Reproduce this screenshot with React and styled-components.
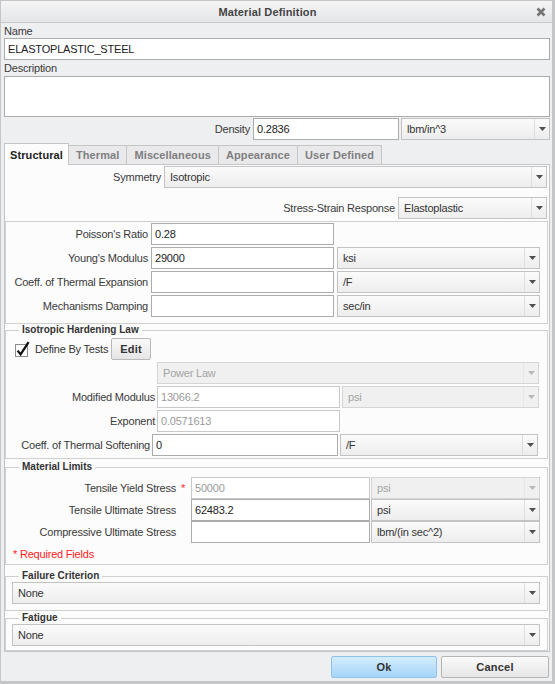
import React from 'react'
import styled, { createGlobalStyle } from 'styled-components'

const GlobalStyle = createGlobalStyle`
    html, body {
        margin: 0;
        padding: 0;
        background: #c6c7c9;
    }
    body {
        font-family: "Liberation Sans", Arial, sans-serif;
        font-size: 11px;
        color: #333333;
    }
    * {
        box-sizing: border-box;
    }
`

const Window = styled.div`
    width: 555px;
    height: 684px;
    border-style: solid;
    border-color: #c5c6c8;
    border-width: 1px 3px 3px 1px;
    background: #eeeff1;
    display: flex;
    flex-direction: column;
    letter-spacing: -0.2px;
`

const TitleBar = styled.div`
    flex: none;
    height: 22px;
    display: grid;
    grid-template-columns: 1fr auto 1fr;
    align-items: center;
    background: linear-gradient(#f5f5f6, #e5e6e8);
    border-bottom: 1px solid #c9cacc;
    font-weight: bold;
    letter-spacing: 0.15px;
    color: #444444;
`

const Title = styled.div`
    grid-column: 2;
    margin-right: 18px;
`

const CloseButton = styled.div`
    justify-self: end;
    width: 22px;
    display: flex;
    align-items: center;
    justify-content: center;
`

const Body = styled.div`
    flex: 1;
    display: flex;
    flex-direction: column;
    padding: 1px 2px 0 3px;
`

const FieldLabel = styled.div`
    height: ${(props) => props.h}px;
    line-height: ${(props) => props.h}px;
    color: #3a3a3a;
`

const TextInput = styled.input`
    width: 100%;
    height: 22px;
    margin: 0;
    border: 1px solid ${(props) => (props.disabled ? '#c9c9c9' : '#acacac')};
    background: #ffffff;
    padding: 0 3px;
    font: inherit;
    letter-spacing: inherit;
    color: ${(props) => (props.disabled ? '#9a9a9a' : '#222222')};
    outline: none;
`

const TextArea = styled.div`
    height: 41px;
    border: 1px solid #acacac;
    background: #ffffff;
    margin-bottom: 1px;
`

const DensityRow = styled.div`
    display: grid;
    grid-template-columns: 1fr 146px 149px;
    column-gap: 2px;
    align-items: center;
    height: 22px;
`

const SideLabel = styled.span`
    text-align: right;
    white-space: nowrap;
    color: #3a3a3a;
    padding-right: ${(props) => props.pr || 0}px;
`

const SelectBox = styled.div`
    height: 22px;
    display: flex;
    border: 1px solid ${(props) => (props.disabled ? '#d5d5d5' : '#c3c3c3')};
    background: ${(props) =>
        props.disabled ? '#f0f0f0' : 'linear-gradient(#fbfbfb, #ededed)'};
    color: ${(props) => (props.disabled ? '#a3a3a3' : '#333333')};
    grid-column: ${(props) => props.span || 'auto'};
`

const SelectText = styled.span`
    flex: 1;
    display: flex;
    align-items: center;
    padding-left: 5px;
    white-space: nowrap;
    overflow: hidden;
`

const SelectArrow = styled.span`
    width: 15px;
    display: flex;
    align-items: center;
    justify-content: center;
    border-left: 1px solid ${(props) => (props.disabled ? '#e6e6e6' : '#dedede')};
`

const TabStrip = styled.div`
    display: flex;
    align-items: flex-end;
    height: 22px;
    margin-top: 3px;
    margin-bottom: -1px;
    position: relative;
    z-index: 1;
`

const Tab = styled.div`
    height: ${(props) => (props.active ? 22 : 19)}px;
    margin-bottom: ${(props) => (props.active ? 0 : 1)}px;
    margin-left: ${(props) => (props.first ? 0 : -1)}px;
    padding: 0 ${(props) => (props.active ? 5 : 7)}px;
    display: flex;
    align-items: center;
    border: 1px solid #c5c5c5;
    border-bottom: none;
    background: ${(props) => (props.active ? '#fcfcfc' : '#e9e9eb')};
    color: ${(props) => (props.active ? '#222222' : '#7f7f7f')};
    font-weight: bold;
    letter-spacing: 0.1px;
`

const Panel = styled.div`
    border: 1px solid #c5c5c5;
    background: #fcfcfc;
    padding: 1px 1px 0 0;
    display: flex;
    flex-direction: column;
`

const TopRow = styled.div`
    display: grid;
    grid-template-columns: 1fr ${(props) => props.w}px;
    column-gap: 3px;
    align-items: center;
    height: 22px;
    padding-right: 1px;
    margin-top: ${(props) => props.mt || 0}px;
`

const Box = styled.div`
    border: 1px solid #d0d0d0;
    margin-top: 2px;
    padding: 1px 0 6px 0;
    display: flex;
    flex-direction: column;
    gap: 2px;
`

const Group = styled.fieldset`
    margin: ${(props) => props.mt || 0}px 0 0 0;
    padding: ${(props) => props.pad};
    border: 1px solid #d0d0d0;
    min-width: 0;
    display: flex;
    flex-direction: column;
    gap: ${(props) => props.gap || 0}px;
`

const GroupTitle = styled.legend`
    margin-left: ${(props) => props.ml}px;
    padding: 0 3px;
    font-size: 10px;
    line-height: 12px;
    font-weight: bold;
    letter-spacing: 0;
    color: #333333;
`

const FormRow = styled.div`
    display: grid;
    grid-template-columns: ${(props) => props.cols};
    column-gap: ${(props) => props.gap}px;
    align-items: center;
    height: 22px;
`

const Star = styled.span`
    color: #ff2a2a;
    padding-left: 4px;
`

const CheckRow = styled.div`
    display: flex;
    align-items: center;
    height: 22px;
    padding-left: 9px;
`

const CheckText = styled.span`
    margin-left: 5px;
    margin-right: 3px;
    color: #333333;
`

const SmallButton = styled.div`
    height: 22px;
    padding: 0 8px;
    display: flex;
    align-items: center;
    border: 1px solid #b9b9b9;
    border-radius: 2px;
    background: linear-gradient(#f9f9f9, #e5e5e5);
    font-weight: bold;
    letter-spacing: 0.2px;
    color: #333333;
`

const Required = styled.div`
    margin-top: 4px;
    height: 14px;
    line-height: 14px;
    padding-left: 7px;
    color: #ff1a1a;
`

const Footer = styled.div`
    flex: none;
    display: flex;
    justify-content: flex-end;
    gap: 4px;
    padding: 4px 3px 3px 0;
`

const DialogButton = styled.div`
    width: ${(props) => props.w}px;
    height: 22px;
    display: flex;
    align-items: center;
    justify-content: center;
    border: 1px solid ${(props) => (props.primary ? '#8fc3ea' : '#b5b5b5')};
    border-radius: 2px;
    background: ${(props) =>
        props.primary
            ? 'linear-gradient(#d4edfd, #a4d4f8)'
            : 'linear-gradient(#fafafa, #e6e6e6)'};
    font-weight: bold;
    letter-spacing: 0.2px;
    color: #333333;
`

const Arrow = ({ disabled }) => (
    <svg width="7" height="4" viewBox="0 0 7 4">
        <polygon points="0,0 7,0 3.5,4" fill={disabled ? '#b8b8b8' : '#4f4f4f'} />
    </svg>
)

const Select = ({ value, disabled, span }) => (
    <SelectBox disabled={disabled} span={span}>
        <SelectText>{value}</SelectText>
        <SelectArrow disabled={disabled}>
            <Arrow disabled={disabled} />
        </SelectArrow>
    </SelectBox>
)

const CloseIcon = () => (
    <svg width="10" height="10" viewBox="0 0 10 10">
        <path d="M1.5 1.5 L8.5 8.5 M8.5 1.5 L1.5 8.5" stroke="#747474" strokeWidth="2.6" />
    </svg>
)

const CheckIcon = () => (
    <svg width="15" height="17" viewBox="0 0 15 17">
        <rect x="0.5" y="3.5" width="12" height="12" fill="#ffffff" stroke="#8c8c8c" />
        <path d="M2.6 9.6 L5.6 13.4 L13.6 1.2" fill="none" stroke="#111111" strokeWidth="2.3" />
    </svg>
)

const tabs = ['Structural', 'Thermal', 'Miscellaneous', 'Appearance', 'User Defined']

const elasticRows = [
    { label: "Poisson's Ratio", value: '0.28' },
    { label: "Young's Modulus", value: '29000', unit: 'ksi' },
    { label: 'Coeff. of Thermal Expansion', value: '', unit: '/F' },
    { label: 'Mechanisms Damping', value: '', unit: 'sec/in' },
]

const limitRows = [
    { label: 'Tensile Yield Stress', value: '50000', unit: 'psi', required: true, disabled: true },
    { label: 'Tensile Ultimate Stress', value: '62483.2', unit: 'psi' },
    { label: 'Compressive Ultimate Stress', value: '', unit: 'lbm/(in sec^2)' },
]

export default function App() {
    return (
        <>
            <GlobalStyle />
            <Window>
                <TitleBar>
                    <Title>Material Definition</Title>
                    <CloseButton>
                        <CloseIcon />
                    </CloseButton>
                </TitleBar>
                <Body>
                    <FieldLabel h={14}>Name</FieldLabel>
                    <TextInput readOnly value="ELASTOPLASTIC_STEEL" />
                    <FieldLabel h={16}>Description</FieldLabel>
                    <TextArea />
                    <DensityRow>
                        <SideLabel pr={1}>Density</SideLabel>
                        <TextInput readOnly value="0.2836" />
                        <Select value="lbm/in^3" />
                    </DensityRow>

                    <TabStrip>
                        {tabs.map((t, i) => (
                            <Tab key={t} active={i === 0} first={i === 0}>
                                {t}
                            </Tab>
                        ))}
                    </TabStrip>
                    <Panel>
                        <TopRow w={383}>
                            <SideLabel>Symmetry</SideLabel>
                            <Select value="Isotropic" />
                        </TopRow>
                        <TopRow w={149} mt={9}>
                            <SideLabel>Stress-Strain Response</SideLabel>
                            <Select value="Elastoplastic" />
                        </TopRow>

                        <Box>
                            {elasticRows.map((r) => (
                                <FormRow key={r.label} cols="142px 183px 203px" gap={3}>
                                    <SideLabel>{r.label}</SideLabel>
                                    <TextInput readOnly value={r.value} />
                                    {r.unit && <Select value={r.unit} />}
                                </FormRow>
                            ))}
                        </Box>

                        <Group pad="2px 0 2px 0" gap={2}>
                            <GroupTitle ml={13}>Isotropic Hardening Law</GroupTitle>
                            <CheckRow>
                                <CheckIcon />
                                <CheckText>Define By Tests</CheckText>
                                <SmallButton>Edit</SmallButton>
                            </CheckRow>
                            <FormRow cols="149px 183px 197px" gap={2}>
                                <Select value="Power Law" disabled span="2 / 4" />
                            </FormRow>
                            <FormRow cols="149px 183px 197px" gap={2}>
                                <SideLabel>Modified Modulus</SideLabel>
                                <TextInput readOnly disabled value="13066.2" />
                                <Select value="psi" disabled />
                            </FormRow>
                            <FormRow cols="149px 183px 197px" gap={2}>
                                <SideLabel>Exponent</SideLabel>
                                <TextInput readOnly disabled value="0.0571613" />
                            </FormRow>
                            <FormRow cols="144px 186px 198px" gap={2}>
                                <SideLabel>Coeff. of Thermal Softening</SideLabel>
                                <TextInput readOnly value="0" />
                                <Select value="/F" />
                            </FormRow>
                        </Group>

                        <Group mt={2} pad="4px 0 3px 0">
                            <GroupTitle ml={13}>Material Limits</GroupTitle>
                            {limitRows.map((r) => (
                                <FormRow key={r.label} cols="170px 13px 179px 169px" gap={1}>
                                    <SideLabel>{r.label}</SideLabel>
                                    <Star>{r.required ? '*' : ''}</Star>
                                    <TextInput readOnly disabled={r.disabled} value={r.value} />
                                    <Select value={r.unit} disabled={r.disabled} />
                                </FormRow>
                            ))}
                            <Required>* Required Fields</Required>
                        </Group>

                        <Group mt={5} pad="0 7px 6px 6px">
                            <GroupTitle ml={7}>Failure Criterion</GroupTitle>
                            <Select value="None" />
                        </Group>

                        <Group mt={1} pad="0 7px 4px 6px">
                            <GroupTitle ml={7}>Fatigue</GroupTitle>
                            <Select value="None" />
                        </Group>
                    </Panel>
                </Body>
                <Footer>
                    <DialogButton primary w={106}>
                        Ok
                    </DialogButton>
                    <DialogButton w={108}>Cancel</DialogButton>
                </Footer>
            </Window>
        </>
    )
}
